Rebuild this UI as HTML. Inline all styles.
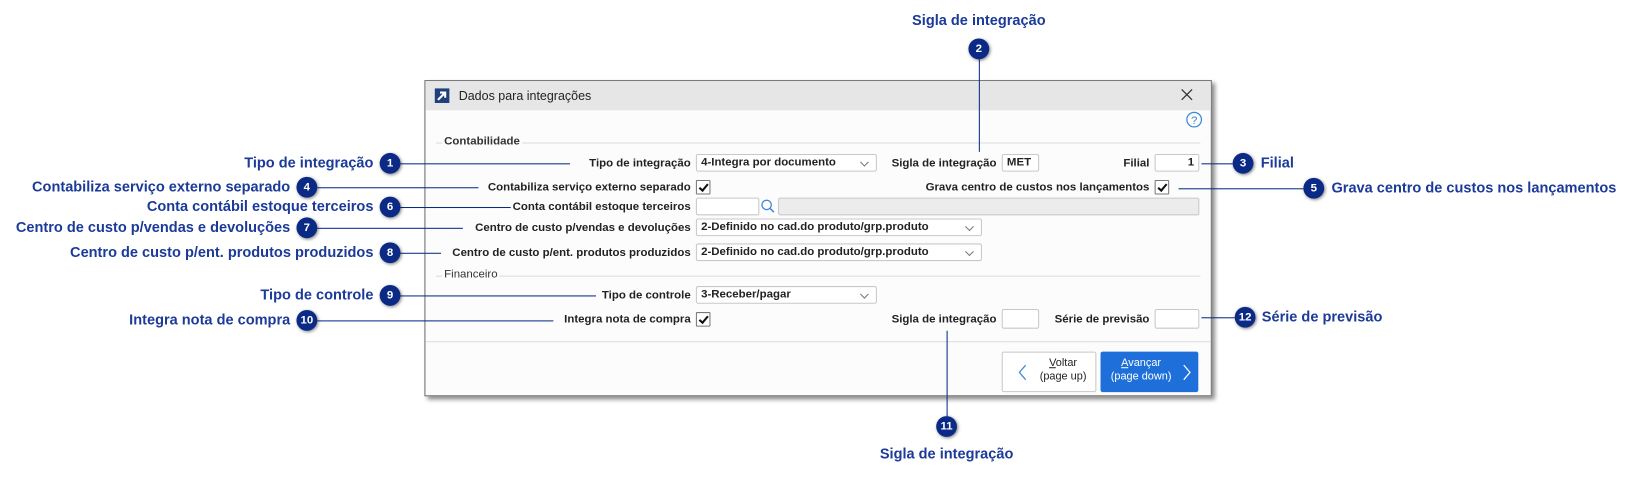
<!DOCTYPE html>
<html><head><meta charset="utf-8"><style>
html,body{margin:0;padding:0;background:#fff;width:1630px;height:479px;overflow:hidden}
#w{position:absolute;left:0;top:0;width:1567px;height:461px;transform:scale(1.0402);transform-origin:0 0;font-family:"Liberation Sans",sans-serif}
.a{position:absolute}
.dlg{left:408px;top:77px;width:755px;height:302px;background:#fcfcfc;border:1px solid #6e6e6e;box-shadow:3px 3px 4px rgba(0,0,0,.45)}
.tb{left:0;top:0;width:755px;height:28px;background:#e6e6e6}
.lb{font-size:11px;font-weight:bold;color:#222;white-space:nowrap;text-align:right}
.in{background:#fff;border:1px solid #c8c8c8;border-radius:2px;height:17px;box-sizing:border-box;font-size:11px;font-weight:bold;color:#222;line-height:15px;padding:0 4px}
.sel::after{content:"";position:absolute;right:8px;top:4px;width:5px;height:5px;border-right:1px solid #777;border-bottom:1px solid #777;transform:rotate(45deg)}
.cb{width:12px;height:12px;border:1px solid #777;background:#fff;border-radius:1px}
.cb::after{content:"";position:absolute;left:4px;top:1px;width:3px;height:7px;border-right:2px solid #111;border-bottom:2px solid #111;transform:rotate(40deg)}
.hl{height:1px;background:#ddd}
.m{width:20px;height:20px;border-radius:50%;background:#0b2a85;color:#fff;font-size:11px;font-weight:bold;text-align:center;line-height:20px;box-shadow:1px 1px 3px rgba(0,0,0,.5)}
.cl{font-size:14px;font-weight:bold;color:#1b3a99;white-space:nowrap}
.ln{background:#0b2a85}
</style></head><body><div id="w">
<div class="a dlg">
 <div class="a tb"></div>
 <div class="a" style="left:9px;top:7px;width:14px;height:14px;background:#1e3f7a"></div>
 <svg class="a" style="left:9px;top:7px" width="14" height="14"><path d="M3 11L10 4M5 4H10V9" stroke="#fff" stroke-width="2" fill="none"/></svg>
 <div class="a" style="left:32px;top:7px;font-size:12px;color:#222">Dados para integrações</div>
 <svg class="a" style="left:726px;top:7px" width="12" height="12"><path d="M1 1L11 11M11 1L1 11" stroke="#333" stroke-width="1.2"/></svg>
 <svg class="a" style="left:731px;top:29px" width="16" height="16"><circle cx="8" cy="8" r="7" stroke="#3d86d6" fill="none" stroke-width="1.2"/><text x="8" y="12" text-anchor="middle" font-size="11" fill="#3d86d6" font-family="Liberation Sans">?</text></svg>
 <div class="a hl" style="left:10px;top:59px;width:735px"></div>
 <div class="a lb" style="left:16px;top:52px;background:#fcfcfc;padding:0 2px;color:#333">Contabilidade</div>
 <div class="a hl" style="left:10px;top:187px;width:735px"></div>
 <div class="a lb" style="left:16px;top:180px;background:#fcfcfc;padding:0 2px;color:#333;font-weight:normal">Financeiro</div>
 <div class="a hl" style="left:0;top:250px;width:755px"></div>
</div>
<!-- rows (page coords) -->
<div class="a lb" style="right:903px;top:151px">Tipo de integração</div>
<div class="a in sel" style="left:669px;top:148px;width:174px">4-Integra por documento</div>
<div class="a lb" style="right:609px;top:151px">Sigla de integração</div>
<div class="a in" style="left:963px;top:148px;width:36px">MET</div>
<div class="a lb" style="right:462px;top:151px">Filial</div>
<div class="a in" style="left:1110px;top:148px;width:43px;text-align:right">1</div>

<div class="a lb" style="right:903px;top:174px">Contabiliza serviço externo separado</div>
<div class="a cb" style="left:669px;top:173px"></div>
<div class="a lb" style="right:462px;top:174px">Grava centro de custos nos lançamentos</div>
<div class="a cb" style="left:1110px;top:173px"></div>

<div class="a lb" style="right:903px;top:193px">Conta contábil estoque terceiros</div>
<div class="a in" style="left:669px;top:190px;width:61px"></div>
<svg class="a" style="left:731px;top:191px" width="15" height="15"><circle cx="6" cy="6" r="4.5" stroke="#3d86d6" fill="none" stroke-width="1.2"/><path d="M9.5 9.5L13 13" stroke="#3d86d6" stroke-width="1.4"/></svg>
<div class="a in" style="left:748px;top:190px;width:405px;background:#ececec"></div>

<div class="a lb" style="right:903px;top:213px">Centro de custo p/vendas e devoluções</div>
<div class="a in sel" style="left:669px;top:210px;width:275px">2-Definido no cad.do produto/grp.produto</div>
<div class="a lb" style="right:903px;top:237px">Centro de custo p/ent. produtos produzidos</div>
<div class="a in sel" style="left:669px;top:234px;width:275px">2-Definido no cad.do produto/grp.produto</div>

<div class="a lb" style="right:903px;top:278px">Tipo de controle</div>
<div class="a in sel" style="left:669px;top:275px;width:174px">3-Receber/pagar</div>

<div class="a lb" style="right:903px;top:301px">Integra nota de compra</div>
<div class="a cb" style="left:669px;top:300px"></div>
<div class="a lb" style="right:609px;top:301px">Sigla de integração</div>
<div class="a in" style="left:963px;top:297px;width:36px;height:19px"></div>
<div class="a lb" style="right:462px;top:301px">Série de previsão</div>
<div class="a in" style="left:1110px;top:297px;width:43px;height:19px"></div>

<div class="a" style="left:963px;top:338px;width:91px;height:39px;border:1px solid #c8c8c8;background:#fff;box-sizing:border-box;border-radius:2px"></div>
<svg class="a" style="left:978px;top:350px" width="10" height="16"><path d="M8 1L2 8L8 15" stroke="#3d86d6" fill="none" stroke-width="1.2"/></svg>
<div class="a" style="left:994px;top:343px;width:56px;text-align:center;font-size:10.5px;color:#222;line-height:13px"><u>V</u>oltar<br>(page up)</div>
<div class="a" style="left:1058px;top:338px;width:94px;height:39px;background:#1e6fd9;border-radius:2px"></div>
<div class="a" style="left:1060px;top:343px;width:74px;text-align:center;font-size:10.5px;color:#fff;line-height:13px"><u>A</u>vançar<br>(page down)</div>
<svg class="a" style="left:1136px;top:350px" width="10" height="16"><path d="M2 1L8 8L2 15" stroke="#fff" fill="none" stroke-width="1.2"/></svg>

<!-- callouts -->
<div class="a ln" style="left:385px;top:157px;width:163px;height:1px"></div>
<div class="a m" style="left:365px;top:147px">1</div>
<div class="a cl" style="right:1208px;top:148px">Tipo de integração</div>
<div class="a ln" style="left:305px;top:180px;width:155px;height:1px"></div>
<div class="a m" style="left:285px;top:170px">4</div>
<div class="a cl" style="right:1288px;top:171px">Contabiliza serviço externo separado</div>
<div class="a ln" style="left:385px;top:199px;width:106px;height:1px"></div>
<div class="a m" style="left:365px;top:189px">6</div>
<div class="a cl" style="right:1208px;top:190px">Conta contábil estoque terceiros</div>
<div class="a ln" style="left:305px;top:219px;width:140px;height:1px"></div>
<div class="a m" style="left:285px;top:209px">7</div>
<div class="a cl" style="right:1288px;top:210px">Centro de custo p/vendas e devoluções</div>
<div class="a ln" style="left:385px;top:243px;width:39px;height:1px"></div>
<div class="a m" style="left:365px;top:233px">8</div>
<div class="a cl" style="right:1208px;top:234px">Centro de custo p/ent. produtos produzidos</div>
<div class="a ln" style="left:385px;top:284px;width:188px;height:1px"></div>
<div class="a m" style="left:365px;top:274px">9</div>
<div class="a cl" style="right:1208px;top:275px">Tipo de controle</div>
<div class="a ln" style="left:305px;top:308px;width:227px;height:1px"></div>
<div class="a m" style="left:285px;top:298px">10</div>
<div class="a cl" style="right:1288px;top:299px">Integra nota de compra</div>

<div class="a ln" style="left:941px;top:57px;width:1px;height:89px"></div>
<div class="a m" style="left:931px;top:37px">2</div>
<div class="a cl" style="left:841px;width:200px;text-align:center;top:11px">Sigla de integração</div>
<div class="a ln" style="left:1155px;top:157px;width:30px;height:1px"></div>
<div class="a m" style="left:1185px;top:147px">3</div>
<div class="a cl" style="left:1212px;top:148px">Filial</div>
<div class="a ln" style="left:1133px;top:181px;width:120px;height:1px"></div>
<div class="a m" style="left:1253px;top:171px">5</div>
<div class="a cl" style="left:1280px;top:172px">Grava centro de custos nos lançamentos</div>
<div class="a ln" style="left:1155px;top:305px;width:32px;height:1px"></div>
<div class="a m" style="left:1187px;top:295px">12</div>
<div class="a cl" style="left:1213px;top:296px">Série de previsão</div>
<div class="a ln" style="left:910px;top:318px;width:1px;height:82px"></div>
<div class="a m" style="left:900px;top:400px">11</div>
<div class="a cl" style="left:810px;width:200px;text-align:center;top:428px">Sigla de integração</div>
</div></body></html>
